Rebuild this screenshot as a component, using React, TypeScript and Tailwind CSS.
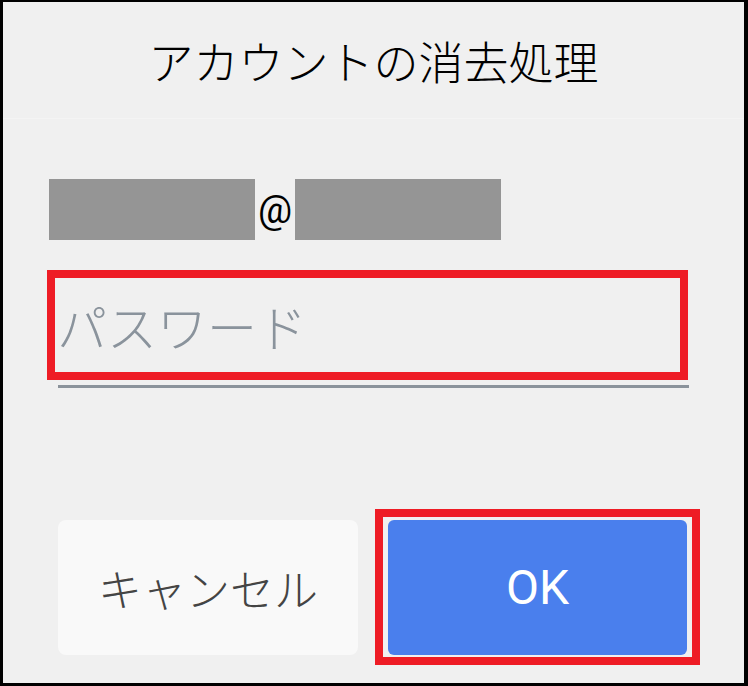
export default function App() {
  const jp = { fontFamily: '"Noto Sans CJK JP", "Noto Sans", sans-serif' };
  const ro = { fontFamily: 'Roboto, "Noto Sans", sans-serif' };
  return (
    <div className="w-[748px] h-[686px] bg-black pt-[2px] pl-[3px] pr-[4px] pb-[3px]">
      <div className="w-full h-full bg-[#f0f0f0] flex flex-col">
        <div className="h-[116px] flex items-center justify-center">
          <span className="text-[45px] font-light leading-none text-black" style={jp}>
            アカウントの消去処理
          </span>
        </div>
        <div className="h-[1px] bg-[#f4f4f4]" />
        <div className="mt-[60px] ml-[46px] flex items-center h-[61px]">
          <div className="w-[206px] h-[61px] bg-[#959595]" />
          <div className="w-[40px] flex justify-center text-[38px] font-normal leading-none text-black" style={ro}>
            @
          </div>
          <div className="w-[206px] h-[61px] bg-[#959595]" />
        </div>
        <div className="mt-[30px] ml-[44px] w-[641px] h-[110px] border-[8px] border-[#ee1c25] flex items-center pl-[2px]">
          <span className="text-[50px] font-light leading-none text-[#8a939c]" style={jp}>
            パスワード
          </span>
        </div>
        <div className="mt-[5px] ml-[55px] w-[631px] h-[3px] bg-[#8b939b]" />
        <div className="mt-[121px] ml-[55px] flex items-start">
          <div className="mt-[11px] w-[300px] h-[135px] rounded-[8px] bg-[#f9f9f9] flex items-center justify-center">
            <span className="text-[44px] font-light leading-none text-[#444444]" style={jp}>
              キャンセル
            </span>
          </div>
          <div className="ml-[17px] w-[325px] h-[156px] border-[8px] border-[#ee1c25] pl-[5px] pr-[5px] pt-[3px] pb-[2px]">
            <div className="w-full h-full rounded-[6px] bg-[#4a7fed] flex items-center justify-center">
              <span className="text-[48px] font-normal leading-none text-white" style={ro}>
                OK
              </span>
            </div>
          </div>
        </div>
      </div>
    </div>
  );
}
